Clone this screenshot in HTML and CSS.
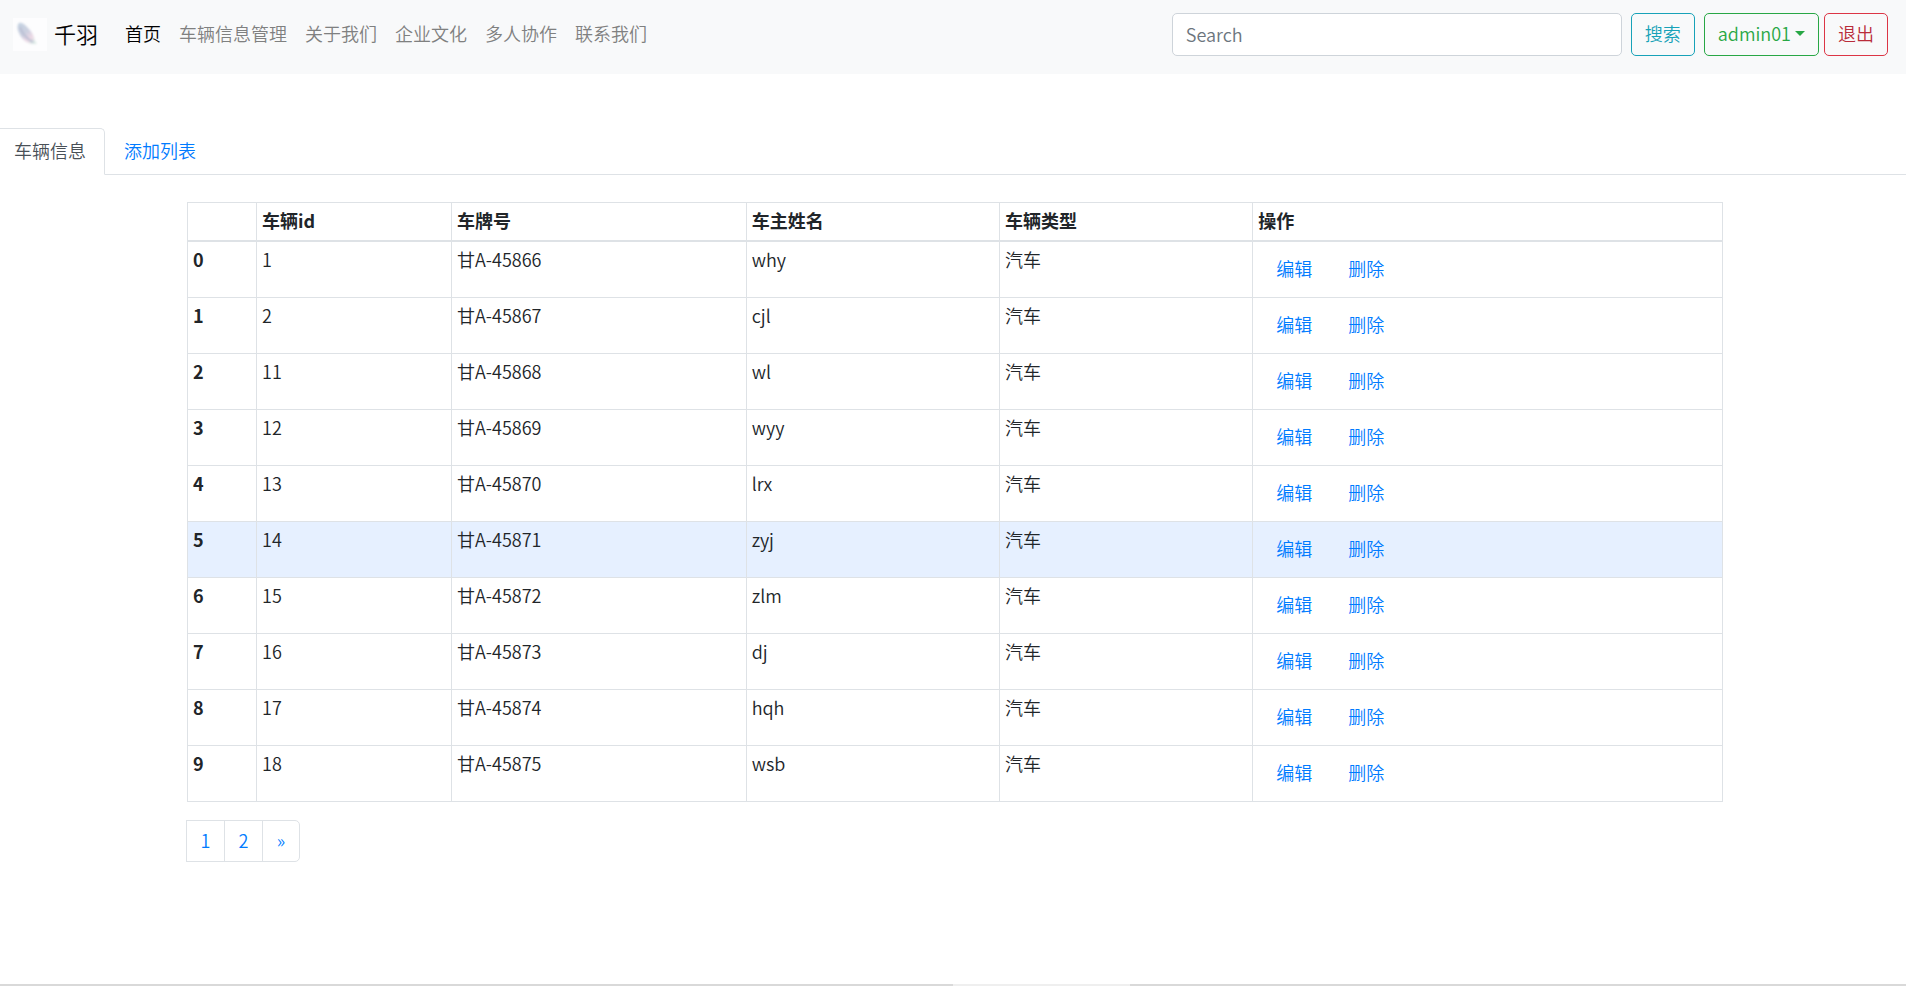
FILE: index.html
```html
<!DOCTYPE html>
<html lang="zh-CN">
<head>
<meta charset="utf-8">
<title>千羽</title>
<link rel="stylesheet" href="styles.css">
</head>
<body>
<header class="navbar">
  <a class="brand" href="#">
    <svg class="brand-logo" viewBox="0 0 34 33" aria-hidden="true">
      <defs>
        <linearGradient id="feather" x1="0" y1="0" x2="0.7" y2="1">
          <stop offset="0" stop-color="#c3d2e2"/>
          <stop offset="0.5" stop-color="#ccd0e0"/>
          <stop offset="0.8" stop-color="#eed8e5"/>
          <stop offset="1" stop-color="#dce9e6"/>
        </linearGradient>
        <filter id="soft"><feGaussianBlur stdDeviation="0.8"/></filter>
      </defs>
      <rect width="34" height="33" fill="#fdfdfe"/>
      <g filter="url(#soft)">
        <path d="M6 5C9 4 12 7 15 10C19 14 21 18 22 23L24 26L19 26C13 25 8 20 6 15C4 11 4 7 6 5Z" fill="url(#feather)"/>
        <path d="M7 9C9 15 14 21 20 24" fill="none" stroke="#b9bed2" stroke-width="2"/>
      </g>
    </svg>
    <span>千羽</span>
  </a>
  <nav class="nav">
    <a class="nav-link current" href="#">首页</a>
    <a class="nav-link" href="#">车辆信息管理</a>
    <a class="nav-link" href="#">关于我们</a>
    <a class="nav-link" href="#">企业文化</a>
    <a class="nav-link" href="#">多人协作</a>
    <a class="nav-link" href="#">联系我们</a>
  </nav>
  <form class="search">
    <input class="search-input" type="search" placeholder="Search" aria-label="Search">
    <button class="btn btn-info" type="button">搜索</button>
  </form>
  <div class="account">
    <button class="btn btn-success" type="button">admin01<span class="caret"></span></button>
    <button class="btn btn-danger" type="button">退出</button>
  </div>
</header>
<nav class="tabs">
  <a class="tab active" href="#">车辆信息</a>
  <a class="tab" href="#">添加列表</a>
</nav>
<main class="content">
  <table class="table">
    <colgroup><col class="col-index"><col class="col-id"><col class="col-plate"><col class="col-owner"><col class="col-type"><col></colgroup>
    <thead>
      <tr><th></th><th>车辆id</th><th>车牌号</th><th>车主姓名</th><th>车辆类型</th><th>操作</th></tr>
    </thead>
    <tbody>
      <tr><th>0</th><td>1</td><td>甘A-45866</td><td>why</td><td>汽车</td><td><div class="actions"><a class="action" href="#">编辑</a><a class="action" href="#">删除</a></div></td></tr>
      <tr><th>1</th><td>2</td><td>甘A-45867</td><td>cjl</td><td>汽车</td><td><div class="actions"><a class="action" href="#">编辑</a><a class="action" href="#">删除</a></div></td></tr>
      <tr><th>2</th><td>11</td><td>甘A-45868</td><td>wl</td><td>汽车</td><td><div class="actions"><a class="action" href="#">编辑</a><a class="action" href="#">删除</a></div></td></tr>
      <tr><th>3</th><td>12</td><td>甘A-45869</td><td>wyy</td><td>汽车</td><td><div class="actions"><a class="action" href="#">编辑</a><a class="action" href="#">删除</a></div></td></tr>
      <tr><th>4</th><td>13</td><td>甘A-45870</td><td>lrx</td><td>汽车</td><td><div class="actions"><a class="action" href="#">编辑</a><a class="action" href="#">删除</a></div></td></tr>
      <tr class="highlight"><th>5</th><td>14</td><td>甘A-45871</td><td>zyj</td><td>汽车</td><td><div class="actions"><a class="action" href="#">编辑</a><a class="action" href="#">删除</a></div></td></tr>
      <tr><th>6</th><td>15</td><td>甘A-45872</td><td>zlm</td><td>汽车</td><td><div class="actions"><a class="action" href="#">编辑</a><a class="action" href="#">删除</a></div></td></tr>
      <tr><th>7</th><td>16</td><td>甘A-45873</td><td>dj</td><td>汽车</td><td><div class="actions"><a class="action" href="#">编辑</a><a class="action" href="#">删除</a></div></td></tr>
      <tr><th>8</th><td>17</td><td>甘A-45874</td><td>hqh</td><td>汽车</td><td><div class="actions"><a class="action" href="#">编辑</a><a class="action" href="#">删除</a></div></td></tr>
      <tr><th>9</th><td>18</td><td>甘A-45875</td><td>wsb</td><td>汽车</td><td><div class="actions"><a class="action" href="#">编辑</a><a class="action" href="#">删除</a></div></td></tr>
    </tbody>
  </table>
  <nav class="pagination" aria-label="分页">
    <a class="page" href="#">1</a>
    <a class="page" href="#">2</a>
    <a class="page" href="#">»</a>
  </nav>
</main>
<footer class="strip"><div class="strip-light"></div></footer>
</body>
</html>
```
FILE: styles.css
```css
* { box-sizing: border-box; }

body {
  margin: 0;
  min-height: 100vh;
  display: flex;
  flex-direction: column;
  background: #fff;
  color: #212529;
  font-family: "Noto Sans CJK SC", sans-serif;
  font-size: 18px;
  font-weight: 350;
  line-height: 25px;
}

a { color: #007bff; text-decoration: none; }

.navbar {
  display: flex;
  align-items: center;
  padding: 13px 18px 18px 13px;
  background: #f8f9fa;
}

.brand {
  display: flex;
  align-items: center;
  gap: 7px;
  margin-right: 18px;
  color: #000;
  font-size: 22px;
}
.brand span { padding-bottom: 2px; }
.brand-logo { width: 34px; height: 33px; }

.nav { display: flex; flex: 1; }
.nav-link { padding: 0 9px 2px; color: #7f8080; }
.nav-link.current { color: #000; }

.search { display: flex; gap: 9px; margin-right: 9px; }
.search-input {
  width: 450px;
  height: 43px;
  padding: 7px 13px 9px;
  border: 1px solid #ced4da;
  border-radius: 5px;
  background: #fff;
  font: inherit;
}
.search-input::placeholder { color: #6c757d; opacity: 1; }

.account { display: flex; gap: 5px; }

.btn {
  display: flex;
  align-items: center;
  padding: 7px 13px 9px;
  border: 1px solid;
  border-radius: 5px;
  background: transparent;
  font: inherit;
}
.btn-info { color: #17a2b8; }
.btn-success { color: #28a745; }
.btn-danger { border-color: #dc3545; color: #b92c3a; }

.caret {
  margin-left: 4px;
  border: 5px solid transparent;
  border-top-color: currentColor;
  border-bottom: 0;
}

.tabs {
  display: flex;
  margin-top: 54px;
  border-bottom: 1px solid #dee2e6;
}
.tab {
  margin-bottom: -1px;
  padding: 9px 18px 11px;
  border: 1px solid transparent;
}
.tab.active {
  padding-left: 14px;
  border-color: #dee2e6 #dee2e6 #fff;
  border-left: 0;
  border-top-right-radius: 5px;
  background: #fff;
  color: #495057;
}

.content { padding: 27px 183px 27px 187px; }

.table {
  width: 100%;
  table-layout: fixed;
  border-collapse: collapse;
}
.col-index { width: 4.5%; }
.col-id { width: 12.7%; }
.col-plate { width: 19.2%; }
.col-owner, .col-type { width: 16.5%; }

.table th, .table td {
  padding: 5px 5px 7px;
  border: 1px solid #dee2e6;
  text-align: left;
  vertical-align: top;
}
.table th { font-weight: 700; }
.table thead th { border-bottom-width: 2px; }
.highlight { background: #e6f0ff; }

.actions { display: flex; }
.action { padding: 9px 18px; }

.pagination { display: flex; margin-top: 18px; }
.page {
  width: 39px;
  margin-left: -1px;
  padding: 8px 0 10px;
  border: 1px solid #dee2e6;
  line-height: 22px;
  text-align: center;
}
.page:last-child { width: 38px; border-radius: 0 5px 5px 0; }

.strip {
  display: flex;
  height: 2px;
  margin-top: auto;
  padding-left: 50%;
  background: #d9d9d9;
}
.strip-light { width: 177px; background: #efefef; }
```
